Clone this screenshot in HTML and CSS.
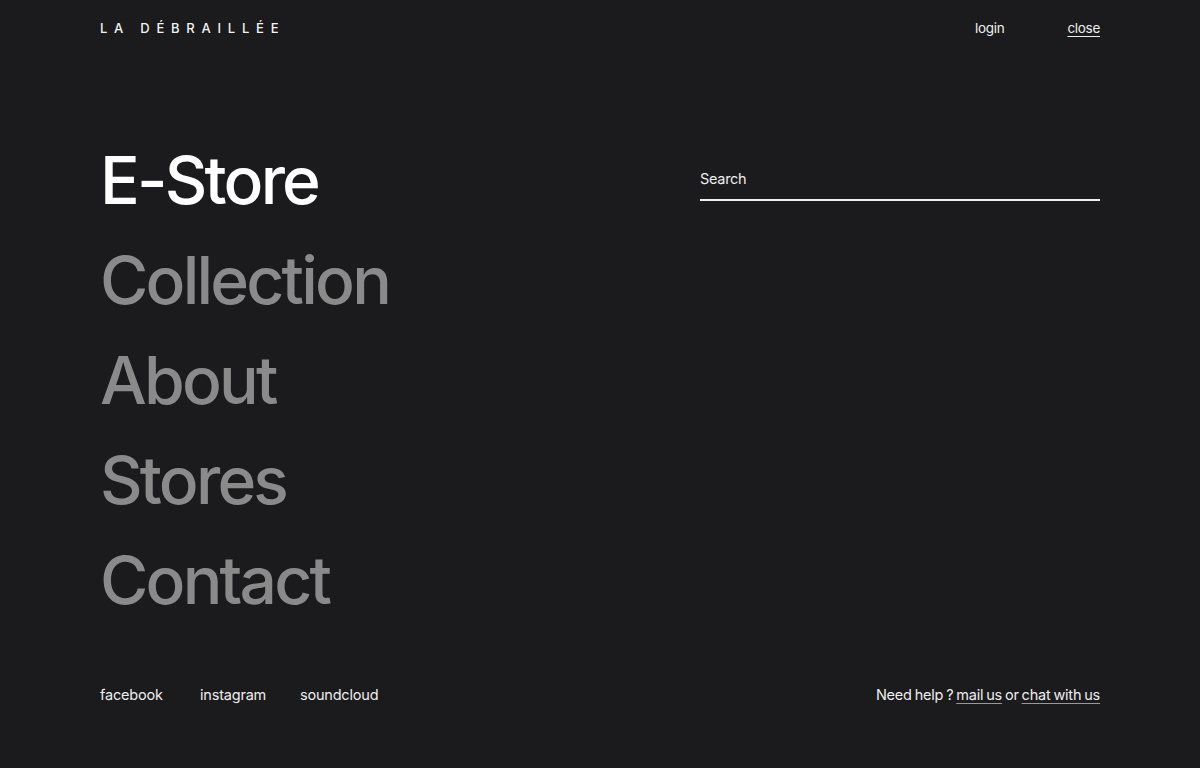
FILE: index.html
```html
<!DOCTYPE html>
<html lang="fr">
<head>
<meta charset="utf-8">
<title>La Débraillée</title>
<link rel="stylesheet" href="styles.css">
</head>
<body>
<div class="page">
  <header class="top">
    <a class="logo" href="#">LA DÉBRAILLÉE</a>
    <nav class="top-links">
      <a class="login" href="#">login</a>
      <a class="close" href="#">close</a>
    </nav>
  </header>
  <main class="main">
    <ul class="menu">
      <li><a class="active" href="#">E-Store</a></li>
      <li><a href="#">Collection</a></li>
      <li><a href="#">About</a></li>
      <li><a href="#">Stores</a></li>
      <li><a href="#">Contact</a></li>
    </ul>
    <div class="search">
      <span class="search-label">Search</span>
    </div>
  </main>
  <footer class="foot">
    <div class="social">
      <a href="#">facebook</a>
      <a href="#">instagram</a>
      <a href="#">soundcloud</a>
    </div>
    <div class="help">Need help ? <a href="#">mail us</a> or <a href="#">chat with us</a></div>
  </footer>
</div>
</body>
</html>
```
FILE: styles.css
```css
* { box-sizing: border-box; }
html, body { margin: 0; padding: 0; }
body {
  background: #1b1a1c;
  color: #fff;
  font-family: "Inter", "Noto Sans", sans-serif;
  height: 768px;
  overflow: hidden;
}
a { color: inherit; text-decoration: none; }
.page {
  width: 1000px;
  margin: 0 auto;
  height: 768px;
  display: flex;
  flex-direction: column;
}
.top {
  display: flex;
  justify-content: space-between;
  align-items: center;
  height: 55px;
}
.logo {
  font-size: 13px;
  font-weight: 500;
  letter-spacing: 0.52em;
  color: #f2f2f2;
}
.top-links { display: flex; gap: 63px; font-size: 13.5px; letter-spacing: -0.3px; color: #eee; }
.close { text-decoration: underline; text-underline-offset: 3px; }
.main {
  display: flex;
  justify-content: space-between;
  margin-top: 85px;
  flex: 1;
}
.menu { list-style: none; margin: 0; padding: 0; }
.menu li { height: 100px; }
.menu a {
  font-size: 66px;
  line-height: 80px;
  font-weight: 500;
  color: #8a8a8a;
  letter-spacing: -2.8px;
  display: block;
}
.menu a.active { color: #fff; }
.search {
  width: 400px;
  height: 66px;
  border-bottom: 2px solid #eee;
  display: flex;
  align-items: flex-end;
  padding-bottom: 12px;
  margin-top: -5px;
}
.search-label { font-size: 14.5px; letter-spacing: -0.3px; color: #eee; }
.foot {
  display: flex;
  justify-content: space-between;
  align-items: center;
  height: 80px;
  margin-bottom: 34px;
  font-size: 14.5px;
  letter-spacing: -0.2px;
  color: #eee;
}
.social { display: flex; }
.social a { width: 100px; }
.help { word-spacing: -1px; }
.help a { text-decoration: underline; text-underline-offset: 3px; text-decoration-color: #999; }
```
